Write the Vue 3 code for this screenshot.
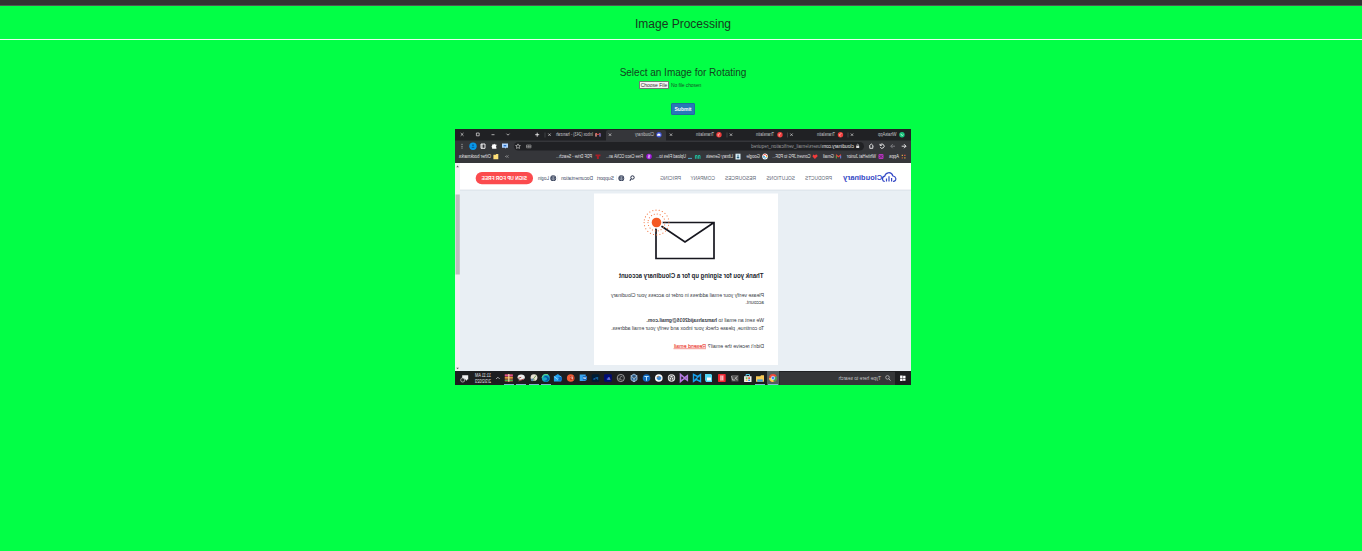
<script setup>
const tabs = [
  { icon: '#19c37d', ix: 9, t: 'WhatsApp', x: 14.5, w: 18.5, close: 59 },
  { icon: '#ee3d3d', ix: 70.5, t: 'Translatin', x: 76, w: 18, close: 119.5 },
  { icon: '#ee3d3d', ix: 131, t: 'Translatin', x: 137, w: 18, close: 180 },
  { icon: '#ee3d3d', ix: 192, t: 'Translatin', x: 197, w: 18, close: 240 },
  { icon: '#4256d8', ix: 252, t: 'Cloudinary', x: 257, w: 19, close: 301 },
  { icon: '', ix: 313, t: 'Inbox (243) - hamzah', x: 318, w: 37, close: 361.5 },
]
const bookmarks = [
  { t: 'Apps', x: 12, w: 10 },
  { t: 'WhiteHat Junior', x: 35, w: 29 },
  { t: 'Gmail', x: 77, w: 11 },
  { t: 'Convert JPG to PDF...', x: 100.5, w: 38 },
  { t: 'Google', x: 151, w: 13.5 },
  { t: 'Library Genesis', x: 178, w: 27 },
  { t: 'Upload Files to...', x: 225, w: 30 },
  { t: 'Free Cisco CCNA an...', x: 268, w: 37 },
  { t: 'PDF Drive - Search...', x: 319, w: 36 },
  { t: 'Other bookmarks', x: 420, w: 32 },
]
const nav = [
  { t: 'PRODUCTS', x: 79, w: 27 },
  { t: 'SOLUTIONS', x: 116, w: 28.5 },
  { t: 'RESOURCES', x: 155, w: 31 },
  { t: 'COMPANY', x: 196, w: 24.5 },
  { t: 'PRICING', x: 230, w: 21 },
]
const links = [
  { t: 'Support', x: 297, w: 17 },
  { t: 'Documentation', x: 318, w: 32 },
  { t: 'Login', x: 362, w: 11 },
]
const running = [138, 151, 365, 377, 390, 402]
</script>

<template>
  <div class="page">
    <div class="topbar"></div>
    <header class="title">Image Processing</header>
    <main class="content">
      <h2>Select an Image for Rotating</h2>
      <form class="form" @submit.prevent>
        <div class="file"><span class="choose">Choose File</span><span class="none">No file chosen</span></div>
        <button class="submit" type="submit">Submit</button>
      </form>
      <svg class="shot" width="456" height="256" viewBox="0 0 456 256">
        <rect width="456" height="256" fill="#e9eff4" />
        <!-- browser tabs -->
        <rect width="456" height="12" fill="#202124" />
        <path d="M245 12V3q0-2 2-2h56q2 0 2 2v9z" fill="#35363a" />
        <g v-for="tab in tabs" :key="tab.ix">
          <circle v-if="tab.icon" :cx="tab.ix" cy="5.7" r="2.7" :fill="tab.icon" />
          <text :x="tab.x" y="7.4" :textLength="tab.w" lengthAdjust="spacingAndGlyphs" font-size="4.6" fill="#c6c8cb">{{ tab.t }}</text>
          <path :d="`M${tab.close - 1.2} 4.5l2.4 2.4m0-2.4l-2.4 2.4`" stroke="#d8d8d8" stroke-width=".7" />
        </g>
        <path d="M7.8 5.6l1 1 1.5-1.8" stroke="#fff" stroke-width=".7" fill="none" />
        <path d="M69.5 4.5l2.2 1.2-1 1.8M130 4.5l2.2 1.2-1 1.8M191 4.5l2.2 1.2-1 1.8" stroke="#ffc4b8" stroke-width=".8" fill="none" />
        <path d="M250.5 6.7q-.5-2 1.5-2.2 2 0 2 2.2z" fill="#fff" />
        <path d="M311 7.6V4l2 1.8L315 4v3.6" stroke="#ea4335" stroke-width="1" fill="none" />
        <path d="M311 4.4v3.2" stroke="#4285f4" /><path d="M315 4.4v3.2" stroke="#fff" stroke-width=".7" />
        <path d="M63 3.5v5M123.5 3.5v5M184 3.5v5M366 3.5v5" stroke="#55575b" stroke-width=".6" />
        <path d="M371.8 5.7h4M373.8 3.7v4" stroke="#fff" stroke-width=".8" />
        <path d="M401.5 4.7l1.5 1.5 1.5-1.5M416.5 5.7h3M431.8 4h2.8v2.8h-2.8zM447.5 4l2.8 2.8m0-2.8l-2.8 2.8" stroke="#e4e4e4" stroke-width=".7" fill="none" />
        <!-- toolbar -->
        <rect y="11.5" width="456" height="22.5" fill="#35363a" />
        <rect x="47" y="13" width="350" height="8.6" rx="4.3" fill="#202124" />
        <g fill="none" stroke="#f1f1f1" stroke-width=".9">
          <path d="M9.3 17.2H5M7 15.2l-2 2 2 2" />
          <path d="M16 17.2h4.2M18.3 15.2l2 2-2 2" stroke="#85868a" />
          <path d="M30.6 15.8a2.1 2.1 0 1 0 .2 2.4M31 14.8v1.6h-1.8" />
          <path d="M37.6 17l2.1-2 2.1 2M38.2 16.7v2.6h3v-2.6" />
        </g>
        <path d="M51.8 16.7h3v2.3h-3z" fill="#ddd" /><path d="M52.5 16.8v-.8a.8.8 0 0 1 1.6 0v.8" stroke="#ddd" stroke-width=".5" fill="none" />
        <text x="57" y="18.8" textLength="32" lengthAdjust="spacingAndGlyphs" font-size="4.8" fill="#e5e5e6">cloudinary.com</text>
        <text x="89" y="18.8" textLength="71" lengthAdjust="spacingAndGlyphs" font-size="4.8" fill="#999b9f">/users/email_verification_required</text>
        <path d="M380 16h4.5v2.8H380zM382.2 16v2.8M380 17.4h4.5" stroke="#aaa" stroke-width=".6" fill="none" />
        <path d="M393 14.9l.7 1.5 1.7.2-1.2 1.2.3 1.6-1.5-.8-1.5.8.3-1.6-1.2-1.2 1.7-.2z" stroke="#ddd" stroke-width=".6" fill="none" />
        <path d="M403 14.5h6v4.2h-3l-1 1v-1h-2z" fill="#b3d5ff" /><path d="M404.7 16h2.7v1.4h-2.7z" fill="#286fca" />
        <path d="M414.6 15.6h1.5q.6-1.5 1.4 0h1.4v1.4q1.5.7 0 1.4v1.3h-4.3v-1.3q1.2-.7 0-1.4z" fill="#fff" />
        <path d="M426 15h4v4.3h-4zM429 15v4.3" stroke="#fff" stroke-width=".9" fill="none" />
        <circle cx="438" cy="17.2" r="3.7" fill="#0796e8" /><circle cx="438" cy="16.3" r="1" fill="#0862a7" /><path d="M436.3 19q1.7-2.7 3.4 0z" fill="#0862a7" />
        <g fill="#e5e5e5"><circle cx="449" cy="15.3" r=".5" /><circle cx="449" cy="17.2" r=".5" /><circle cx="449" cy="19.1" r=".5" /></g>
        <!-- bookmarks -->
        <text v-for="b in bookmarks" :key="b.t" :x="b.x" y="29.4" :textLength="b.w" lengthAdjust="spacingAndGlyphs" font-size="4.6" fill="#e4e4e6">{{ b.t }}</text>
        <path d="M5.5 25.7h1.3v1.3H5.5z" fill="#e85a47" /><path d="M8 25.7h1.3v1.3H8zM5.5 28.2h1.3v1.3H5.5z" fill="#d6a548" /><path d="M8 28.2h1.3v1.3H8z" fill="#b65735" />
        <rect x="27.5" y="25" width="5" height="5" rx="1" fill="#b733bd" /><path d="M28.5 26l3 3m0-3l-3 3" stroke="#40224d" stroke-width=".7" />
        <path d="M70.5 29.3v-3.2l2 1.6 2-1.6v3.2" stroke="#ea4335" stroke-width="1.1" fill="none" /><path d="M70.3 26.6v2.8" stroke="#4385ef" /><path d="M74.7 26.6v2.8" stroke="#37a856" />
        <path d="M93.2 27l1.5-1.8 1.5 1 1.6-.8.7 2.2-2.4 2.3z" fill="#f13b3b" />
        <circle cx="146" cy="27.5" r="2.9" fill="#fff" /><path d="M147.8 26.4a2 2 0 0 0-3.6.6" stroke="#ea4335" stroke-width=".9" fill="none" /><path d="M144.2 27v1.3" stroke="#fbbc05" /><path d="M144.5 28.5q2 2 3.4-.9H146" stroke="#3498d0" stroke-width=".9" fill="none" />
        <rect x="170.5" y="24.7" width="5" height="5.8" fill="#d9edf6" /><path d="M173 25.7v3.8M171.8 28.5h2.4" stroke="#235874" stroke-width=".9" />
        <path d="M211 29.8v-3.3h1.6v3.3M214 29.8v-3.3h1.6v3.3" stroke="#21ba9b" stroke-width="1" fill="none" /><path d="M219 29.4h4" stroke="#58bce9" stroke-width=".8" />
        <circle cx="262" cy="27.5" r="2.8" fill="#9b16d6" /><path d="M263 26.2h-1.8v1.2h1.5v1.4H261" stroke="#fff" stroke-width=".6" fill="none" />
        <path d="M310.5 25.5h5v1.8h-1.4v2.8h-2v-2.8h-1.6z" fill="#a71f27" />
        <path d="M402.7 26.5l1 1-1 1M404.3 26.5l1 1-1 1" stroke="#ddd" stroke-width=".6" fill="none" />
        <path d="M412.7 25h2l.6.8h2.3v4.4h-4.9z" fill="#ffdf78" />
        <!-- site header -->
        <rect y="34" width="456" height="26.7" fill="#fff" /><path d="M0 61.2h451" stroke="#d9dfe7" stroke-width=".8" />
        <path d="M18 52.5q-3.2-.4-2.8-3.2.6-2.2 2.9-2.3 1.2-3.8 4.8-3.2 2.8.6 3.4 3.4 2.6.7 2.2 3.1-.4 2-2.3 2.2M19.4 49v3.5M22 47.3v5.2M24.5 49.6v2.9" fill="none" stroke="#3448c5" stroke-width="1.2" />
        <text x="28.8" y="50.7" textLength="39" lengthAdjust="spacingAndGlyphs" class="bold" font-size="8" fill="#3448c5">Cloudinary</text>
        <text v-for="n in nav" :key="n.t" :x="n.x" y="51" :textLength="n.w" lengthAdjust="spacingAndGlyphs" font-size="5.2" fill="#606675">{{ n.t }}</text>
        <text v-for="l in links" :key="l.t" :x="l.x" y="51" :textLength="l.w" lengthAdjust="spacingAndGlyphs" font-size="5.1" fill="#3c455d">{{ l.t }}</text>
        <circle cx="278.5" cy="48.5" r="1.7" fill="none" stroke="#1d2741" /><path d="M279.8 50l1.4 1.7" stroke="#1d2741" stroke-width="1.1" />
        <g fill="#29334e"><circle cx="289.7" cy="49.2" r="2.9" /><circle cx="357.8" cy="49.2" r="2.9" /></g>
        <path d="M287 49.2h5.4M289.7 46.4v5.6M287.8 47.6q1.9 1 3.8 0M287.8 50.8q1.9-1 3.8 0M355 49.2h5.6M357.8 46.4v5.6M356 47.6q1.8 1 3.6 0M356 50.8q1.8-1 3.6 0" stroke="#cfd4dd" stroke-width=".5" fill="none" />
        <path d="M294.5 46v6M353.5 46v6" stroke="#e5e7eb" stroke-width=".5" />
        <rect x="378" y="43" width="57.3" height="12.3" rx="6.1" fill="#fb4b4e" />
        <text x="384" y="51.3" textLength="45.5" lengthAdjust="spacingAndGlyphs" class="bold" font-size="5.7" fill="#fff">SIGN UP FOR FREE</text>
        <!-- confirmation card -->
        <rect x="133" y="64.5" width="184" height="171.5" fill="#fff" />
        <path d="M197 93.5h58v36h-58zM197 93.5l29 19.5 29-19.5" fill="none" stroke="#17171f" stroke-width="1.7" />
        <circle cx="254.5" cy="93.5" r="6.2" fill="#fff" />
        <circle cx="254.5" cy="93.5" r="4.8" fill="#f45a24" />
        <g fill="none" stroke="#f47741" stroke-linecap="round" stroke-width="1.1"><circle cx="254.5" cy="93.5" r="8.5" stroke-dasharray=".1 2.9" /><circle cx="254.5" cy="93.5" r="12.4" stroke-dasharray=".1 3.15" /></g>
        <text x="147.5" y="149.4" textLength="144.5" lengthAdjust="spacingAndGlyphs" class="bold" font-size="6.3" fill="#20232b">Thank you for signing up for a Cloudinary account</text>
        <g font-size="5.4" fill="#363a43">
          <text x="147" y="167.5" textLength="153" lengthAdjust="spacingAndGlyphs">Please verify your email address in order to access your Cloudinary</text>
          <text x="147" y="175" textLength="18.5" lengthAdjust="spacingAndGlyphs">account.</text>
          <text x="147" y="193" textLength="45.5" lengthAdjust="spacingAndGlyphs">We sent an email to</text>
          <text x="194" y="193" textLength="70.5" lengthAdjust="spacingAndGlyphs" class="bold">hamzahsajid2016@gmail.com.</text>
          <text x="147" y="200.5" textLength="153" lengthAdjust="spacingAndGlyphs">To continue, please check your inbox and verify your email address.</text>
          <text x="147" y="218.5" textLength="56" lengthAdjust="spacingAndGlyphs">Didn't receive the email?</text>
          <text x="205" y="218.5" textLength="32" lengthAdjust="spacingAndGlyphs" fill="#ed4a3e" stroke="#ed4a3e" stroke-width=".15">Resend email</text>
        </g>
        <path d="M205 219.7h32.5" stroke="#f06b61" stroke-width=".7" />
        <rect x="451" y="34" width="5" height="208" fill="#f1f1f1" /><rect x="451.2" y="65.5" width="4.3" height="80" fill="#bdbdbd" />
        <path d="M452.1 38.2l1.3-1.6 1.3 1.6zM452.1 238.7l1.3 1.5 1.3-1.5z" fill="#555" />
        <!-- taskbar -->
        <rect y="242" width="456" height="14" fill="#1d1e20" />
        <rect x="16" y="242.8" width="115.5" height="13.2" fill="#353638" />
        <path d="M5.5 246.7h2.4v2.3H5.5zM8.4 246.5h2.5v2.5H8.4zM5.5 249.5h2.4v2.3H5.5zM8.4 249.5h2.5v2.5H8.4z" fill="#fff" />
        <circle cx="23.5" cy="248.4" r="1.8" fill="none" stroke="#ddd" stroke-width=".6" /><path d="M22.2 249.7l-1.7 2" stroke="#ddd" stroke-width=".7" />
        <text x="30" y="251.2" textLength="42.5" lengthAdjust="spacingAndGlyphs" font-size="5" fill="#c4c4c5">Type here to search</text>
        <rect x="132" y="242" width="12" height="14" fill="#555c60" />
        <circle cx="138" cy="249" r="3.9" fill="#ef4637" /><path d="M138 249l-3.4-2a3.9 3.9 0 0 0 2.8 5.9z" fill="#34a853" /><path d="M138 249h3.9a3.9 3.9 0 0 1-4.5 3.9z" fill="#ffce42" /><circle cx="138" cy="249" r="1.8" fill="#4285f4" stroke="#fff" stroke-width=".6" />
        <path d="M147 246.3h3l.8.9h4.2v5.5h-8z" fill="#f8ca57" /><path d="M148.2 250.4h5.6v2.3h-5.6z" fill="#3f9bdb" />
        <path d="M159.5 247.2h7.4v5.8h-7.4z" fill="#f2f3f3" /><path d="M161.5 247v-1.5h3.4v1.5" fill="none" stroke="#5ac7ed" /><path d="M161 248.3h1.8v1.6H161z" fill="#e75a38" /><path d="M163.5 248.3h1.8v1.6h-1.8z" fill="#58b949" /><path d="M161 250.4h1.8v1.5H161z" fill="#348adf" /><path d="M163.5 250.4h1.8v1.5h-1.8z" fill="#f0b943" />
        <path d="M172.5 246h7v6.5h-7z" fill="#555" /><path d="M173.5 247.5l2.3 1.7-2.3 1.6M176 251h2.5l1-4" stroke="#ddd" stroke-width=".7" fill="none" />
        <rect x="185.3" y="245.1" width="7.7" height="7.9" rx=".7" fill="#ed2430" /><path d="M187.3 247h3.7M187.3 249h3.7M187.3 251h3.7M188.3 247v4M190 247v4" stroke="#fff" stroke-width=".65" />
        <path d="M199 246l1-1h6v6l-1 2h-6z" fill="#55d5f5" /><path d="M200 248.5h4v3h-4z" fill="#fff" />
        <path d="M217.5 245.5v7l-3-2-4 2v-7l3 2zM211 246l6 6" fill="none" stroke="#18a1ed" stroke-width="1.4" />
        <path d="M230.5 245.5v7l-4-3.3-2.8 2v-4.4l2.8 2z" fill="none" stroke="#b47be1" stroke-width="1.6" />
        <circle cx="239.5" cy="249" r="3.7" fill="#e8e8e8" /><path d="M239.5 246.3l2.2 1.3v2.6l-2.2 1.4-2.2-1.4v-2.6zM237.3 247.6l2.2 1.2 2.2-1.2M239.5 248.8v2.8" stroke="#303236" stroke-width=".7" fill="none" />
        <circle cx="252.2" cy="249" r="3.8" fill="#fff" /><path d="M249.8 248l2.5-1.2 2 1v2.3l-2.2 1.3-2.3-1.2z" fill="#3b8bd3" /><path d="M252.5 246.8l1.8 1-1.5 1z" fill="#e98b34" />
        <circle cx="264.5" cy="249" r="3.8" fill="#1369bd" /><path d="M262.3 247.5h4.3M264.5 247.3v4.4" stroke="#b5e1fa" stroke-width="1" />
        <path d="M277 245l3.3 2-3.3 2.3-3.3-2.3zM274 247.8v3l3 2.1 3-2.1v-3M277 249v3.5" fill="#326697" stroke="#c6e4fb" stroke-width=".7" />
        <circle cx="290.2" cy="249" r="3.6" fill="#242629" stroke="#c7c7c7" stroke-width=".7" /><path d="M288.5 248q2-2 2.3.8t2 1M288.5 251q2.5.5 2.7-1.8" stroke="#aaa" stroke-width=".6" fill="none" />
        <rect x="299.2" y="245.2" width="7.7" height="7.6" rx="1" fill="#000b70" /><text x="300.7" y="250.7" font-size="4" fill="#9999ff">Ai</text>
        <rect x="311.7" y="245.2" width="7.6" height="7.6" rx="1" fill="#001d34" /><text x="312.8" y="250.7" font-size="4" fill="#31a8ff">Ps</text>
        <path d="M325.3 245.5h6v6.5h-6z" fill="#38a3ed" /><rect x="324" y="247" width="4.2" height="4.2" fill="#1769bd" /><path d="M325 248l.7 2 .6-1.6.6 1.6.7-2" fill="none" stroke="#fff" stroke-width=".5" />
        <circle cx="340.3" cy="249" r="3.8" fill="#f05c36" /><rect x="337" y="247" width="4" height="4" fill="#c73b20" /><path d="M338.5 250.4v-2.6h1q1 .7 0 1.5h-1" fill="none" stroke="#fff" stroke-width=".5" />
        <path d="M349.8 247.5l3.3-2.5 4 2.5v5h-7.3z" fill="#24a2ef" /><path d="M349.8 247.5l3.6 2.7 3.7-2.7" fill="none" stroke="#bcecff" stroke-width=".7" /><rect x="349" y="248" width="3.6" height="3.6" fill="#126bc0" />
        <circle cx="365.2" cy="249" r="4" fill="#18a7c4" /><path d="M361.4 249.8q3.3-5.3 6.2-1.2-3.4-1.2-3.7 1.2.4 2 3.7 2-3.8 2.7-6.2-2z" fill="#075caa" /><path d="M363 245.8q4.5-1.6 6 2.9" stroke="#65d580" fill="none" />
        <circle cx="377" cy="248.6" r="3.4" fill="#e5dfd2" /><path d="M374.7 246.3l3.6 4.5M376 251h4" stroke="#77a05c" stroke-width="1" /><circle cx="378.8" cy="250.8" r="1.4" fill="#5d82ab" />
        <ellipse cx="389.8" cy="248.2" rx="3.6" ry="2.7" fill="#eee" /><path d="M387 250l5.5 2M389.8 248.3l3 1" stroke="#a34b4a" stroke-width="1" />
        <rect x="398.2" y="245" width="8" height="7.8" fill="#8e3b32" /><path d="M398.2 246.4h8" stroke="#d9519a" stroke-width="1.5" /><path d="M398.2 248.8h8" stroke="#efb83c" stroke-width="1.2" /><path d="M398.2 251.4h8" stroke="#4daa4c" stroke-width="1.4" /><path d="M402.2 245v7.8" stroke="#f1d4a8" stroke-width="1.2" />
        <path v-for="r in running" :key="r" :d="`M${r - 5} 255.5h10`" stroke="#8fc0e5" stroke-width=".9" />
        <path d="M411.3 250l1.8-1.8 1.8 1.8" fill="none" stroke="#ddd" stroke-width=".7" />
        <text x="420" y="248.1" textLength="16" lengthAdjust="spacingAndGlyphs" font-size="4.5" fill="#e0e0e0">11:11 AM</text>
        <text x="420" y="253.6" textLength="16" lengthAdjust="spacingAndGlyphs" font-size="4.5" fill="#e0e0e0">2/3/2023</text>
        <path d="M442.8 246.3h6v4.3h-3.5l-1.3 1.3v-1.3h-1.2z" fill="#eee" /><circle cx="448.3" cy="251" r="2.1" fill="#303133" stroke="#ddd" stroke-width=".6" />
      </svg>
    </main>
  </div>
</template>

<style>
body { background: #02ff46; overflow: hidden; }
</style>
<style scoped>
.page { height: 551px; background: #02ff46; color: #222; font-family: "Liberation Sans", Arial, sans-serif; overflow: hidden; }
.topbar { height: 5px; background: #333; border-bottom: 1px solid #505a55; box-sizing: border-box; height: 6px; }
.title { height: 33px; border-bottom: 1px solid #eaffee; font-size: 12px; line-height: 37px; text-align: center; padding-left: 4px; color: #17391f; }
.content { display: flex; flex-direction: column; align-items: center; padding-left: 4px; }
h2 { margin: 26px 0 0; font-size: 10px; line-height: 14px; font-weight: 400; color: #124420; }
.form { width: 88px; display: flex; flex-direction: column; margin: 1px 0 14px; }
.file { display: flex; align-items: center; height: 8px; font-size: 5px; white-space: nowrap; }
.choose { box-sizing: border-box; width: 30px; height: 8px; line-height: 6px; text-align: center; background: #f3f3f3; border: 1px solid #717b74; color: #333; }
.none { margin-left: 2px; color: #165426; letter-spacing: -0.1px; }
.submit { align-self: center; margin: 14px 0 0; padding: 0 0 1px; width: 24px; height: 12px; border: 1px solid #2467a4; border-radius: 1px; background: #2878b8; color: #fff; font: bold 5px "Liberation Sans", Arial, sans-serif; line-height: 8px; }
.shot { display: block; transform: scaleX(-1); font-family: "Liberation Sans", Arial, sans-serif; }
.bold { font-weight: 700; }
</style>
